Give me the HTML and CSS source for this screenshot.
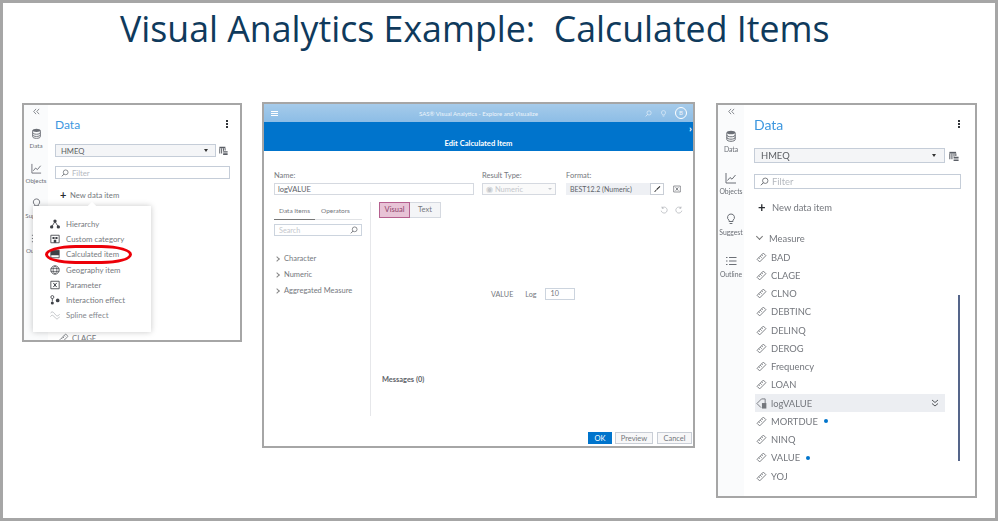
FILE: index.html
```html
<!DOCTYPE html>
<html lang="en">
<head>
    <meta charset="UTF-8">
    <title>Visual Analytics Example: Calculated Items</title>
    <link rel="stylesheet" href="styles.css">
</head>
<body>
<svg class="defs" width="0" height="0">
    <symbol id="i-measure" viewBox="0 0 12 12">
        <path d="M1.2 8 8 1.2 10.8 4 4 10.8Z M3 6.200l1.200 1.200 M4.600 4.600l1.600 1.600 M6.200 3l1.200 1.200" fill="none" stroke="currentColor" stroke-width="1"/>
    </symbol>
    <symbol id="i-db" viewBox="0 0 12 12">
        <ellipse cx="6" cy="2.500" rx="4.200" ry="1.800" fill="currentColor"/>
        <path d="M1.800 2.500v7c0 1 1.900 1.800 4.200 1.800s4.200-.8 4.200-1.800v-7 M1.800 5c0 1 1.900 1.800 4.200 1.800s4.200-.8 4.200-1.800 M1.800 7.400c0 1 1.900 1.800 4.200 1.800s4.200-.8 4.200-1.800" fill="none" stroke="currentColor"/>
    </symbol>
    <symbol id="i-chart" viewBox="0 0 12 12">
        <path d="M1 1v10h10 M2.500 8.500 5 5.500l2 1.700L10.500 3" fill="none" stroke="currentColor"/>
    </symbol>
    <symbol id="i-bulb" viewBox="0 0 12 12">
        <path d="M6 1a3.400 3.400 0 0 0-2 6.200V8.500h4V7.200A3.400 3.400 0 0 0 6 1Z M4.600 10.500h2.800" fill="none" stroke="currentColor"/>
    </symbol>
    <symbol id="i-list" viewBox="0 0 12 12">
        <path d="M4 2.500h7.500 M4 6h7.500 M4 9.500h7.500 M1 2.500h1.500 M1 6h1.500 M1 9.500h1.500" fill="none" stroke="currentColor"/>
    </symbol>
    <symbol id="i-search" viewBox="0 0 12 12">
        <circle cx="7" cy="5" r="3.600" fill="none" stroke="currentColor"/>
        <path d="M4.500 7.600 1.200 11" fill="none" stroke="currentColor" stroke-width="1.200"/>
    </symbol>
    <symbol id="i-table" viewBox="0 0 12 12">
        <path d="M.5 1h8v2h-8Z" fill="currentColor"/>
        <path d="M1 3v7 M3.500 3v7 M6 3v3.500 M8.200 3v3" stroke="currentColor" stroke-width="1.300"/>
        <path d="M5.500 7h6v1.300h-6Z M5.500 9h6v1.200h-6Z M5.500 10.800h6V12h-6Z" fill="currentColor"/>
    </symbol>
    <symbol id="i-tree" viewBox="0 0 12 12">
        <circle cx="6" cy="2.500" r="2" fill="currentColor"/>
        <circle cx="2" cy="9.500" r="2" fill="currentColor"/>
        <circle cx="10" cy="9.500" r="2" fill="currentColor"/>
        <path d="M6 3 2 9.500 M6 3l4 6.500" stroke="currentColor"/>
    </symbol>
    <symbol id="i-custom" viewBox="0 0 12 12">
        <path d="M1 1.500h10v9H1Z" fill="none" stroke="currentColor"/>
        <path d="M3 3.500h2.500v2.500H3Z M6.500 3.500H9v2.500H6.500Z M4.500 7h3v3.500h-3Z" fill="currentColor"/>
    </symbol>
    <symbol id="i-calc" viewBox="0 0 12 12">
        <path d="M1 1.500h10v9H1Z" fill="none" stroke="currentColor"/>
        <path d="M1 1.500h10v6H1Z" fill="currentColor"/>
    </symbol>
    <symbol id="i-globe" viewBox="0 0 12 12">
        <circle cx="6" cy="6" r="5" fill="none" stroke="currentColor"/>
        <path d="M1 4.300h10 M1 7.700h10 M6 1c-3 3-3 7 0 10 M6 1c3 3 3 7 0 10" fill="none" stroke="currentColor" stroke-width=".8"/>
    </symbol>
    <symbol id="i-param" viewBox="0 0 12 12">
        <path d="M1 1.500h10v9H1Z" fill="none" stroke="currentColor"/>
        <path d="M4 3.500 8 8.500 M8 3.500 4 8.500" fill="none" stroke="currentColor" stroke-width="1.200"/>
    </symbol>
    <symbol id="i-inter" viewBox="0 0 12 12">
        <circle cx="2.800" cy="2.500" r="1.800" fill="none" stroke="currentColor"/>
        <circle cx="2.800" cy="9.500" r="1.800" fill="currentColor"/>
        <circle cx="9.200" cy="6.500" r="2.200" fill="currentColor"/>
        <path d="M2.800 4.300v3.400" stroke="currentColor"/>
    </symbol>
    <symbol id="i-spline" viewBox="0 0 12 12">
        <path d="M.5 4c2-3 3.500-1.500 5.500 1s3.500 3 5.500 0 M.5 8c2-3 3.500-1.500 5.500 1s3.500 2 5.500-1" fill="none" stroke="currentColor" stroke-width=".8"/>
    </symbol>
    <symbol id="i-calc-item" viewBox="0 0 12 12">
        <path d="M1 6 6 1h4v5" fill="none" stroke="currentColor"/>
        <path d="M1 6l4.500 4.500" fill="none" stroke="currentColor"/>
        <path d="M6.500 5.500h4.800v6H6.500Z" fill="currentColor"/>
    </symbol>
    <symbol id="i-brush" viewBox="0 0 12 12">
        <path d="M10 1.500 11 2.500 6 7.500 4.800 6.200Z" fill="currentColor"/>
        <path d="M4.500 7 5.300 8 3 10.500 1.800 10Z" fill="currentColor"/>
    </symbol>
    <symbol id="i-undo" viewBox="0 0 12 12">
        <path d="M3 3a4.500 4.500 0 1 1-1.200 4 M3 .8V3.400h2.600" fill="none" stroke="currentColor"/>
    </symbol>
    <symbol id="i-collapse" viewBox="0 0 8 8">
        <path d="M3.500 1 .8 4l2.700 3 M7 1 4.300 4 7 7" fill="none" stroke="currentColor" stroke-width=".9"/>
    </symbol>
    <symbol id="i-more" viewBox="0 0 8 8">
        <path d="M1 1l3 2.500L7 1 M1 4.500 4 7l3-2.500" fill="none" stroke="currentColor" stroke-width=".9"/>
    </symbol>
</svg>

<main class="slide">
    <h1 class="slide-title">Visual Analytics Example:&nbsp; Calculated Items</h1>

    <div class="shots">
        <!-- left shot: new data item menu -->
        <section class="shot shot-menu">
            <nav class="rail">
                <div class="rail-collapse"><svg><use href="#i-collapse"/></svg></div>
                <div class="rail-item"><svg><use href="#i-db"/></svg><span>Data</span></div>
                <div class="rail-item"><svg><use href="#i-chart"/></svg><span>Objects</span></div>
                <div class="rail-item"><svg><use href="#i-bulb"/></svg><span>Suggest</span></div>
                <div class="rail-item"><svg><use href="#i-list"/></svg><span>Outline</span></div>
            </nav>
            <div class="pane">
                <div class="pane-head"><h2>Data</h2><span class="kebab"><i></i><i></i><i></i></span></div>
                <div class="source-row">
                    <div class="source">HMEQ<b></b></div>
                    <svg class="source-icon"><use href="#i-table"/></svg>
                </div>
                <div class="filter"><svg><use href="#i-search"/></svg>Filter</div>
                <div class="new-item"><span>+</span>New data item</div>
                <div class="clipped-row"><svg><use href="#i-measure"/></svg>CLAGE</div>
            </div>
            <ul class="popup">
                <li><svg><use href="#i-tree"/></svg>Hierarchy</li>
                <li><svg><use href="#i-custom"/></svg>Custom category</li>
                <li><svg><use href="#i-calc"/></svg>Calculated item</li>
                <li><svg><use href="#i-globe"/></svg>Geography item</li>
                <li><svg><use href="#i-param"/></svg>Parameter</li>
                <li><svg><use href="#i-inter"/></svg>Interaction effect</li>
                <li class="popup-dim"><svg><use href="#i-spline"/></svg>Spline effect</li>
            </ul>
            <div class="popup-ring"></div>
        </section>

        <!-- middle shot: edit calculated item dialog -->
        <section class="shot shot-dialog">
            <header class="app-bar">
                <span class="burger"><i></i><i></i><i></i></span>
                <span class="app-name">SAS&reg; Visual Analytics - Explore and Visualize</span>
                <span class="app-tools">
                    <svg><use href="#i-search"/></svg>
                    <svg><use href="#i-bulb"/></svg>
                    <span class="avatar">B</span>
                </span>
            </header>
            <div class="dialog-band">Edit Calculated Item<span class="band-arrow">&#8250;</span></div>
            <div class="dialog-fields">
                <label class="field field-name">Name:<span class="input">logVALUE</span></label>
                <label class="field field-type">Result Type:<span class="input input-off">&#9673; Numeric<b></b></span></label>
                <label class="field field-format">Format:<span class="format-box"><span class="format-value">BEST12.2 (Numeric)</span><span class="format-btn"><svg><use href="#i-brush"/></svg></span></span></label>
                <svg class="field-extra"><use href="#i-param"/></svg>
            </div>
            <div class="dialog-split">
                <div class="items-col">
                    <div class="tabs"><span class="tab tab-on">Data Items</span><span class="tab">Operators</span></div>
                    <div class="search">Search<svg><use href="#i-search"/></svg></div>
                    <ul class="tree">
                        <li>Character</li>
                        <li>Numeric</li>
                        <li>Aggregated Measure</li>
                    </ul>
                </div>
                <div class="editor-col">
                    <div class="editor-top">
                        <div class="toggle"><span class="toggle-on">Visual</span><span>Text</span></div>
                        <div class="undo"><svg><use href="#i-undo"/></svg><svg class="redo"><use href="#i-undo"/></svg></div>
                    </div>
                    <div class="expr"><span>VALUE</span><span>Log</span><span class="expr-input">10</span></div>
                    <div class="messages">Messages (0)</div>
                </div>
            </div>
            <footer class="dialog-foot">
                <button class="btn btn-ok">OK</button>
                <button class="btn btn-preview">Preview</button>
                <button class="btn btn-cancel">Cancel</button>
            </footer>
        </section>

        <!-- right shot: data pane with the new item -->
        <section class="shot shot-data">
            <nav class="rail">
                <div class="rail-collapse"><svg><use href="#i-collapse"/></svg></div>
                <div class="rail-item"><svg><use href="#i-db"/></svg><span>Data</span></div>
                <div class="rail-item"><svg><use href="#i-chart"/></svg><span>Objects</span></div>
                <div class="rail-item"><svg><use href="#i-bulb"/></svg><span>Suggest</span></div>
                <div class="rail-item"><svg><use href="#i-list"/></svg><span>Outline</span></div>
            </nav>
            <div class="pane">
                <div class="pane-head"><h2>Data</h2><span class="kebab"><i></i><i></i><i></i></span></div>
                <div class="source-row">
                    <div class="source">HMEQ<b></b></div>
                    <svg class="source-icon"><use href="#i-table"/></svg>
                </div>
                <div class="filter"><svg><use href="#i-search"/></svg>Filter</div>
                <div class="new-item"><span>+</span>New data item</div>
                <div class="group"><i class="chev"></i>Measure</div>
                <ul class="measures">
                    <li><svg><use href="#i-measure"/></svg>BAD</li>
                    <li><svg><use href="#i-measure"/></svg>CLAGE</li>
                    <li><svg><use href="#i-measure"/></svg>CLNO</li>
                    <li><svg><use href="#i-measure"/></svg>DEBTINC</li>
                    <li><svg><use href="#i-measure"/></svg>DELINQ</li>
                    <li><svg><use href="#i-measure"/></svg>DEROG</li>
                    <li><svg><use href="#i-measure"/></svg>Frequency</li>
                    <li><svg><use href="#i-measure"/></svg>LOAN</li>
                    <li class="row-on"><svg><use href="#i-calc-item"/></svg>logVALUE<svg class="row-more"><use href="#i-more"/></svg></li>
                    <li><svg><use href="#i-measure"/></svg>MORTDUE<i class="dot"></i></li>
                    <li><svg><use href="#i-measure"/></svg>NINQ</li>
                    <li><svg><use href="#i-measure"/></svg>VALUE<i class="dot"></i></li>
                    <li><svg><use href="#i-measure"/></svg>YOJ</li>
                </ul>
                <div class="scroll-thumb"></div>
            </div>
        </section>
    </div>
</main>
</body>
</html>
```

FILE: styles.css
```css
* {
    box-sizing: border-box;
}

html, body {
    margin: 0;
    padding: 0;
    background: #fff;
}

.defs {
    position: absolute;
}

ul {
    list-style: none;
    margin: 0;
    padding: 0;
}

svg {
    display: block;
}

.slide {
    width: 998px;
    height: 521px;
    border: 3px solid #a6a6a6;
    overflow: hidden;
    background: #fff;
}

.slide-title {
    margin: 0;
    height: 55px;
    padding-left: 117px;
    font-family: "Open Sans", sans-serif;
    font-size: 35.700px;
    font-weight: 400;
    line-height: 50px;
    color: #0f3a5c;
    white-space: nowrap;
}

.shots {
    display: flex;
    align-items: flex-start;
    margin-top: 45px;
    padding-left: 19px;
    font-family: Lato, sans-serif;
    color: #74777d;
    filter: blur(.45px);
}

.shot {
    position: relative;
    flex: none;
    display: flex;
    border: 2px solid #a6a6a6;
    background: #fff;
    overflow: hidden;
}

/* rail shared by left and right shots */
.rail {
    flex: none;
    background: #fafbfc;
    text-align: center;
    color: #6b6f76;
}

.rail-collapse {
    padding-top: 3px;
}

.rail-collapse svg {
    width: 7px;
    height: 7px;
    margin: 0 auto;
}

.rail-item span {
    display: block;
    white-space: nowrap;
}

.rail-item svg {
    margin: 0 auto;
}

.pane {
    position: relative;
    flex: 1;
    min-width: 0;
}

.pane-head {
    display: flex;
    justify-content: space-between;
    align-items: center;
}

.pane-head h2 {
    margin: 0;
    font-weight: 400;
    color: #3d97df;
}

.kebab {
    display: flex;
    flex-direction: column;
    gap: 1px;
}

.kebab i {
    width: 2px;
    height: 2px;
    background: #33363b;
}

.source-row {
    display: flex;
    align-items: center;
}

.source {
    display: flex;
    align-items: center;
    justify-content: space-between;
    background: #f4f5f7;
    border: 1px solid #c5cdd8;
    color: #5a5d62;
}

.source b {
    border: 2.500px solid transparent;
    border-top: 3px solid #333;
    border-bottom: 0;
}

.source-icon {
    color: #5b5f66;
}

.filter {
    display: flex;
    align-items: center;
    border: 1px solid #c5cdd8;
    color: #b5b9bf;
}

.filter svg {
    color: #55595f;
}

.new-item {
    display: flex;
    align-items: center;
}

.new-item span {
    color: #2a2d31;
    font-weight: 700;
}

/* left shot */
.shot-menu {
    width: 220px;
    height: 239px;
}

.shot-menu .rail {
    width: 24px;
    height: 100%;
}

.shot-menu .rail-collapse {
    height: 23px;
}

.shot-menu .rail-item {
    height: 35px;
    font-size: 6.200px;
}

.shot-menu .rail-item svg {
    width: 11px;
    height: 11px;
    margin-bottom: 3px;
}

.shot-menu .pane {
    padding: 11px 0 0 7px;
    font-size: 7.700px;
}

.shot-menu .pane-head {
    width: 175px;
    height: 16px;
    padding-right: 2px;
}

.shot-menu .pane-head h2 {
    font-size: 12px;
}

.shot-menu .source-row {
    margin-top: 12px;
}

.shot-menu .source {
    width: 161px;
    height: 13px;
    padding: 0 7px 0 5px;
}

.shot-menu .source-icon {
    width: 9px;
    height: 9px;
    margin-left: 3px;
}

.shot-menu .filter {
    width: 175px;
    height: 13px;
    margin-top: 9px;
    padding-left: 5px;
}

.shot-menu .filter svg {
    width: 8px;
    height: 8px;
    margin-right: 3px;
}

.shot-menu .new-item {
    margin-top: 10px;
    padding-left: 5px;
}

.shot-menu .new-item span {
    width: 10px;
    font-size: 11px;
    line-height: 11px;
}

.clipped-row {
    display: flex;
    align-items: center;
    gap: 3px;
    margin-top: 133px;
    padding-left: 4px;
}

.clipped-row svg {
    width: 10px;
    height: 10px;
}

.popup {
    position: absolute;
    left: 9px;
    top: 101px;
    width: 118px;
    height: 126px;
    padding-top: 10px;
    background: #fff;
    box-shadow: 0 0 6px rgba(0, 0, 0, .22);
    font-size: 7.800px;
    color: #777a80;
}

.popup::before {
    content: "";
    position: absolute;
    left: 56px;
    top: -3px;
    width: 6px;
    height: 6px;
    background: #fff;
    transform: rotate(45deg);
}

.popup li {
    display: flex;
    align-items: center;
    height: 15.300px;
    padding-left: 17px;
}

.popup li svg {
    width: 10px;
    height: 10px;
    margin-right: 6px;
    color: #3d4046;
}

.popup li.popup-dim {
    color: #85888e;
}

.popup li.popup-dim svg {
    color: #a5a8ad;
}

.popup-ring {
    position: absolute;
    left: 21px;
    top: 140px;
    width: 87px;
    height: 19px;
    border: 3px solid #ec0008;
    border-radius: 35% / 50%;
}

/* middle shot */
.shot-dialog {
    flex-direction: column;
    width: 433px;
    height: 346px;
    margin-left: 20px;
    margin-top: -1px;
    font-size: 7.200px;
    color: #74777d;
}

.app-bar {
    display: flex;
    align-items: center;
    height: 18px;
    padding: 0 6px 0 7px;
    background: linear-gradient(#a6cbea, #8cbde6);
    color: #eef5fb;
}

.burger {
    display: flex;
    flex-direction: column;
    gap: 1px;
    width: 7px;
}

.burger i {
    height: 1px;
    background: #fff;
}

.app-name {
    margin-left: 141px;
    font-size: 6px;
    white-space: nowrap;
}

.app-tools {
    display: flex;
    align-items: center;
    gap: 8px;
    margin-left: auto;
}

.app-tools svg {
    width: 7px;
    height: 7px;
}

.avatar {
    width: 12px;
    height: 12px;
    border: 1px solid #fff;
    border-radius: 50%;
    font-size: 6px;
    line-height: 10px;
    text-align: center;
}

.dialog-band {
    position: relative;
    height: 29px;
    padding-top: 16px;
    background: #0074cc;
    color: #fff;
    font-size: 7.600px;
    font-weight: 700;
    text-align: center;
}

.band-arrow {
    position: absolute;
    right: 1px;
    top: 0;
    font-size: 10px;
    line-height: 12px;
}

.dialog-fields {
    display: flex;
    align-items: flex-end;
    padding: 20px 0 0 10px;
}

.field {
    display: flex;
    flex-direction: column;
    gap: 3px;
    font-size: 7.500px;
    line-height: 9px;
}

.input {
    display: flex;
    align-items: center;
    height: 12px;
    padding: 0 3px;
    border: 1px solid #d5d9e0;
    color: #606369;
}

.field-name {
    width: 200px;
}

.field-type {
    width: 74px;
    margin-left: 8px;
}

.input-off {
    justify-content: space-between;
    color: #c4c7cc;
    background: #fafafa;
}

.input-off b {
    border: 2px solid transparent;
    border-top: 2.500px solid #c4c7cc;
    border-bottom: 0;
}

.field-format {
    margin-left: 10px;
}

.format-box {
    display: flex;
    height: 12px;
}

.format-value {
    width: 84px;
    padding: 2px 0 0 4px;
    background: #eef0f4;
    color: #606369;
    font-size: 7px;
}

.format-btn {
    width: 14px;
    padding: 1px 2px;
    border: 1px solid #c9ced6;
    color: #222;
}

.format-btn svg {
    width: 8px;
    height: 8px;
}

.field-extra {
    width: 8px;
    height: 8px;
    margin: 0 0 2px 9px;
    color: #606369;
}

.dialog-split {
    flex: 1;
    display: flex;
    margin-top: 7px;
}

.items-col {
    width: 88px;
    margin-left: 10px;
}

.tabs {
    display: flex;
    height: 18px;
    padding-top: 5px;
    border-bottom: 1px solid #e1e3e6;
    font-size: 6.500px;
}

.tab {
    width: 41px;
    text-align: center;
}

.tab-on {
    height: 13px;
    border-bottom: 1px solid #777;
}

.search {
    display: flex;
    align-items: center;
    justify-content: space-between;
    width: 88px;
    height: 12px;
    margin-top: 4px;
    padding: 0 3px 0 4px;
    border: 1px solid #ccd4de;
    color: #c5c8cd;
}

.search svg {
    width: 8px;
    height: 8px;
    color: #55585e;
}

.tree {
    margin-top: 15px;
    font-size: 7.500px;
}

.tree li {
    position: relative;
    height: 16px;
    padding-left: 10px;
    line-height: 16px;
    white-space: nowrap;
}

.tree li::before {
    content: "";
    position: absolute;
    left: 1px;
    top: 6px;
    width: 3px;
    height: 3px;
    border-top: 1px solid #888;
    border-right: 1px solid #888;
    transform: rotate(45deg);
}

.editor-col {
    width: 322px;
    height: 214px;
    margin-left: 8px;
    padding-left: 11px;
    border-left: 1px solid #e6e7ea;
}

.editor-top {
    display: flex;
    justify-content: space-between;
    align-items: center;
    margin-left: -3px;
}

.toggle {
    display: flex;
    height: 16px;
    border: 1px solid #d5d9e0;
    background: #f4f5f7;
    font-size: 7.500px;
    line-height: 14px;
    text-align: center;
}

.toggle span {
    width: 30px;
}

.toggle .toggle-on {
    width: 31px;
    margin: -1px 0 -1px -1px;
    background: #e8c3d6;
    border: 1px solid #b5608f;
    color: #8d3f6a;
}

.undo {
    display: flex;
    gap: 7px;
    margin-right: 9px;
    color: #a9acb2;
}

.undo svg {
    width: 8px;
    height: 8px;
}

.redo {
    transform: scaleX(-1);
}

.expr {
    display: flex;
    align-items: center;
    margin-top: 70px;
    padding-left: 109px;
}

.expr span + span {
    margin-left: 12px;
}

.expr .expr-input {
    width: 30px;
    height: 12px;
    margin-left: 8px;
    padding-left: 5px;
    border: 1px solid #ccd4de;
    line-height: 9px;
}

.messages {
    margin-top: 75px;
    font-weight: 700;
    font-size: 7.400px;
    color: #606369;
}

.dialog-foot {
    display: flex;
    justify-content: flex-end;
    gap: 3px;
    padding: 0 1px 2px 0;
}

.btn {
    height: 12px;
    padding: 0;
    border: 1px solid #c9ced6;
    background: #f7f7f8;
    color: #74777d;
    font: 7.500px Lato, sans-serif;
}

.btn-ok {
    width: 24px;
    border-color: #0074cc;
    background: #0074cc;
    color: #fff;
}

.btn-preview {
    width: 38px;
}

.btn-cancel {
    width: 35px;
    margin-left: 1px;
}

/* right shot */
.shot-data {
    width: 261px;
    height: 395px;
    margin-left: 21px;
}

.shot-data .rail {
    width: 26px;
    height: 100%;
}

.shot-data .rail-collapse {
    height: 25px;
}

.shot-data .rail-item {
    height: 41.700px;
    font-size: 6.800px;
}

.shot-data .rail-item svg {
    width: 12px;
    height: 12px;
    margin-bottom: 3px;
}

.shot-data .pane {
    padding: 10px 0 0 10px;
    font-size: 9.400px;
}

.shot-data .pane-head {
    width: 207px;
    height: 18px;
    padding-right: 1px;
}

.shot-data .pane-head h2 {
    font-size: 14px;
}

.shot-data .source-row {
    margin-top: 15px;
}

.shot-data .source {
    width: 191px;
    height: 15px;
    padding: 0 8px 0 6px;
}

.shot-data .source-icon {
    width: 10px;
    height: 10px;
    margin-left: 4px;
}

.shot-data .filter {
    width: 207px;
    height: 15px;
    margin-top: 11px;
    padding-left: 5px;
}

.shot-data .filter svg {
    width: 9px;
    height: 9px;
    margin-right: 3px;
}

.shot-data .new-item {
    margin-top: 12px;
    padding-left: 4px;
}

.shot-data .new-item span {
    width: 14px;
    font-size: 13px;
    line-height: 13px;
}

.group {
    display: flex;
    align-items: center;
    height: 12px;
    margin-top: 18px;
    padding-left: 3px;
}

.chev {
    width: 5px;
    height: 5px;
    margin: -3px 7px 0 0;
    border-right: 1px solid #777;
    border-bottom: 1px solid #777;
    transform: rotate(45deg);
}

.measures {
    width: 190px;
    margin: 4px 0 0 1px;
}

.measures li {
    display: flex;
    align-items: center;
    height: 18.250px;
    padding-left: 1px;
}

.measures li svg {
    width: 11px;
    height: 11px;
    margin-right: 4px;
    color: #74777d;
}

.row-on {
    background: #eceef2;
}

.measures li .row-more {
    width: 8px;
    height: 8px;
    margin: 0 6px 0 auto;
    color: #44474c;
}

.dot {
    width: 4px;
    height: 4px;
    margin-left: 6px;
    border-radius: 50%;
    background: #0074cc;
}

.scroll-thumb {
    position: absolute;
    left: 214px;
    top: 190px;
    width: 2px;
    height: 166px;
    background: #55658a;
}
```
